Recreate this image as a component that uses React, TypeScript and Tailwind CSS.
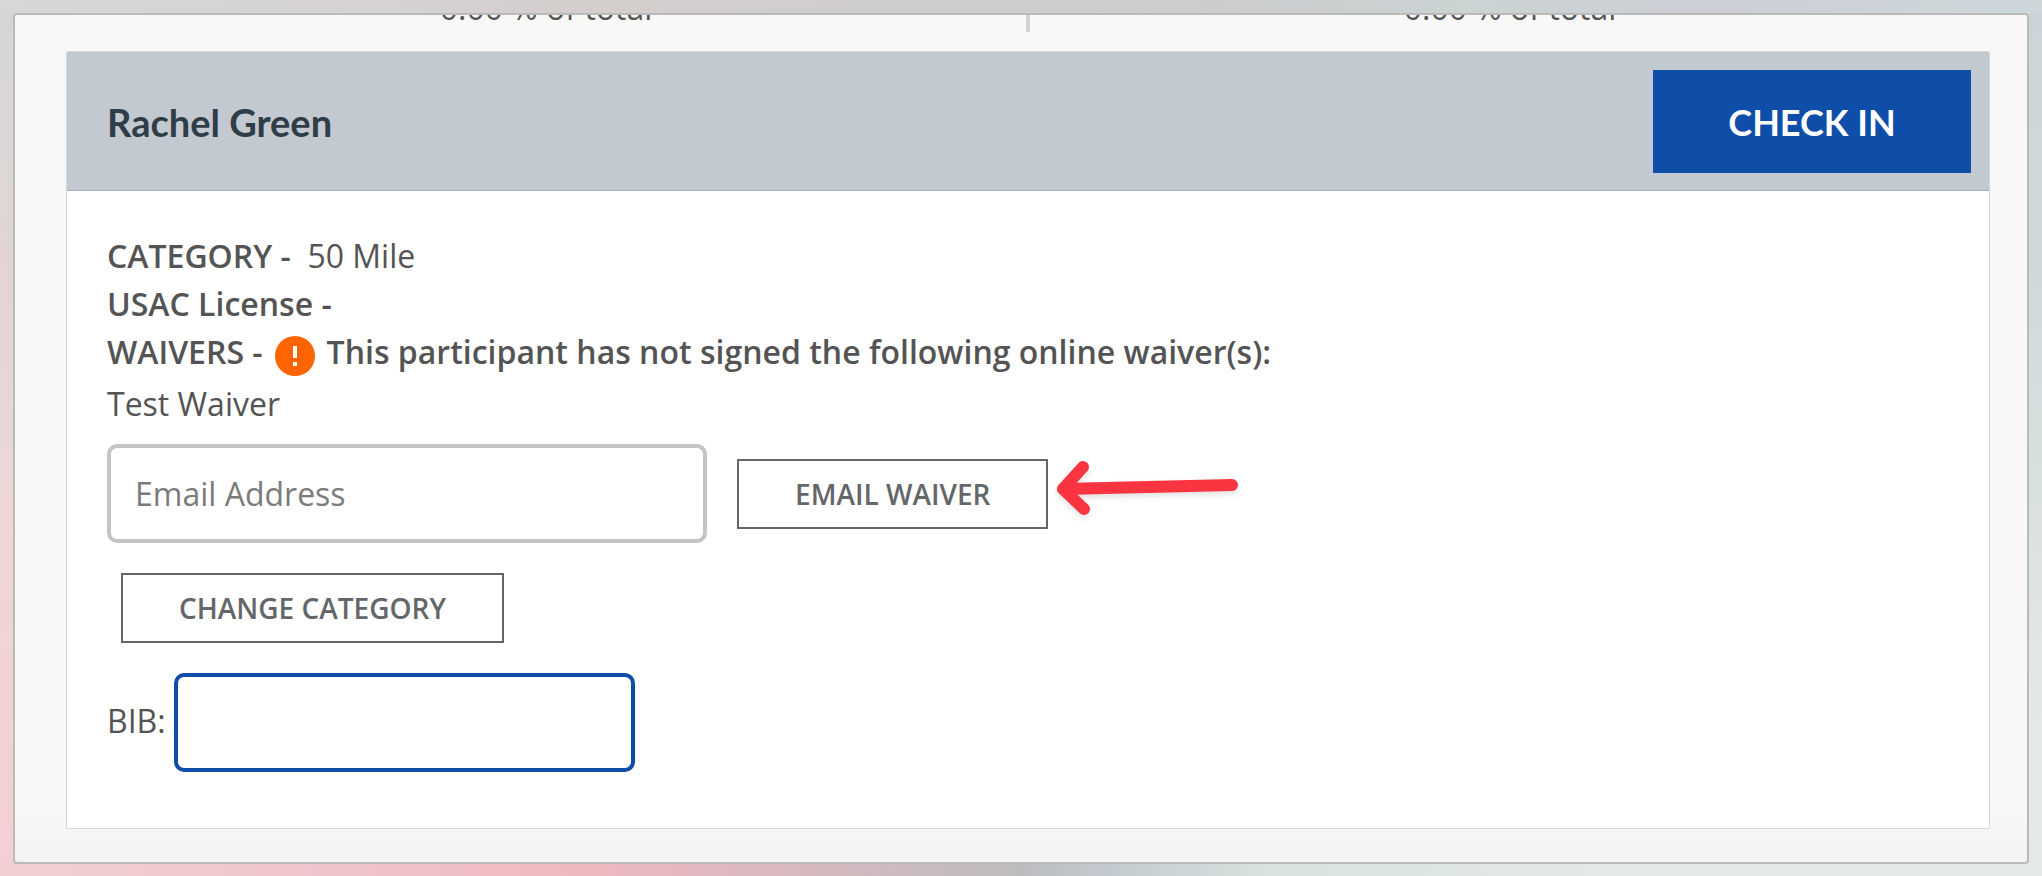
import React, { useState } from 'react';

// --- Data ---
const STATS = ['0.00 % of total', '0.00 % of total'];

// --- Shared styles ---
const OUTLINE_BUTTON =
  'h-[70px] shrink-0 border-2 border-[#646769] bg-white px-14 text-[28px] font-semibold whitespace-nowrap text-[#646769] hover:bg-gray-100';

const TEXT_INPUT =
  'h-[99px] min-w-0 rounded-[10px] border-4 bg-white px-6 text-[#545454] outline-none placeholder:text-[#7b7b7b]';

// Soft pastel frame around the window, one strip per edge
const FRAME =
  '[background:linear-gradient(90deg,#d7d7d7,#d4cecd_30%,#cbccce_60%,#cbd3d3_72%,#cccfd5_83%,#cdd7da)_top/100%_13px_no-repeat,linear-gradient(90deg,#f1d0d3,#f0c2ca_18%,#efbbbf_27%,#e6b7bf_33%,#bcbcbe_50%,#c3cacf_54%,#d8e2df_62%,#e4eae6_80%,#e5e9e8)_bottom/100%_13px_no-repeat,linear-gradient(180deg,#d5d5d5,#ddd7d6_20%,#e2d3d5_30%,#e9d7d8_50%,#f0d6d5_60%,#f2cfd4)_left/50%_100%_no-repeat,linear-gradient(180deg,#cbd3d8,#cfd8d8_18%,#d0d7da_28%,#d8e0df_55%,#e2e9e5_80%,#e5e9e7)_right/50%_100%_no-repeat]';

function AlertIcon() {
  return (
    <svg className="mt-2 h-10 w-10 shrink-0" viewBox="0 0 40 40" aria-hidden="true">
      <circle cx="20" cy="20" r="20" fill="#ff6400" />
      <path d="M18 10h4v12h-4zM18 26h4v4h-4z" fill="#fff" />
    </svg>
  );
}

function Arrow() {
  return (
    <svg
      className="pointer-events-none absolute top-1/2 left-full h-20 w-[200px] -translate-y-1/2 drop-shadow-md"
      viewBox="0 0 200 80"
      fill="none"
      aria-hidden="true"
    >
      <path
        d="M184 31L15 35M35 13L15 35L36 55"
        stroke="#fa3440"
        strokeWidth="12"
        strokeLinecap="round"
        strokeLinejoin="round"
      />
    </svg>
  );
}

export default function App() {
  const [email, setEmail] = useState('');
  const [bib, setBib] = useState('');

  return (
    <div className={`min-h-screen p-[13px] font-['Open_Sans',sans-serif] text-[32px] leading-[48px] text-[#545454] ${FRAME}`}>
      <main className="overflow-hidden rounded-sm border-2 border-[#b9bab9] bg-linear-to-b from-[#f8f8f8] from-92% to-[#f3f3f3] pr-[37px] pb-[33px] pl-[51px]">
        {/* Stats row, scrolled mostly out of view */}
        <div className="mb-[19px] flex h-[17px] items-end">
          {STATS.map((stat, i) => (
            <p key={i} className="flex-1 border-[#d3d3d3] text-center not-last:border-r-4">
              {stat}
            </p>
          ))}
        </div>

        <section className="overflow-hidden rounded-xs border border-[#d8d8d8] bg-white">
          <header className="flex items-center justify-between border-b border-[#a5aeb6] bg-[#c2c9d1] pt-[18px] pr-[18px] pb-[17px] pl-10">
            <h2 className="font-['Lato',sans-serif] text-[38px] font-bold text-[#2f3d47]">Rachel Green</h2>
            <button
              type="button"
              className="h-[103px] w-[318px] bg-[#0e4da8] font-['Lato',sans-serif] text-[36px] font-bold text-white hover:bg-[#0b3f8a]"
            >
              CHECK IN
            </button>
          </header>

          <div className="px-10 pt-[41px] pb-14">
            <p>
              <strong className="font-semibold">CATEGORY -</strong>&nbsp; 50 Mile
            </p>
            <p>
              <strong className="font-semibold">USAC License -</strong>
            </p>
            <p className="flex gap-3 pb-1 font-semibold">
              WAIVERS - <AlertIcon /> This participant has not signed the following online waiver(s):
            </p>
            <p>Test Waiver</p>

            <form className="mt-4 flex items-center gap-[30px]" onSubmit={(e) => e.preventDefault()}>
              <input
                type="email"
                aria-label="Email Address"
                placeholder="Email Address"
                value={email}
                onChange={(e) => setEmail(e.target.value)}
                className={`w-[600px] border-[#c4c4c4] ${TEXT_INPUT}`}
              />
              <div className="relative">
                <button type="submit" className={OUTLINE_BUTTON}>
                  EMAIL WAIVER
                </button>
                <Arrow />
              </div>
            </form>

            <div className="my-[30px] ml-[14px] flex">
              <button type="button" className={OUTLINE_BUTTON}>
                CHANGE CATEGORY
              </button>
            </div>

            <div className="flex items-center gap-2">
              <label htmlFor="bib" className="pb-1">
                BIB:
              </label>
              <input
                id="bib"
                type="text"
                value={bib}
                onChange={(e) => setBib(e.target.value)}
                className={`w-[461px] border-[#0e4da8] ${TEXT_INPUT}`}
              />
            </div>
          </div>
        </section>
      </main>
    </div>
  );
}
